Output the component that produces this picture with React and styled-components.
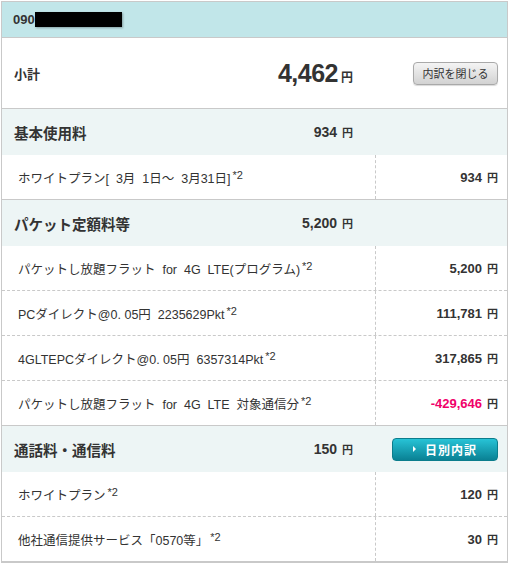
import React from "react";
import styled, { createGlobalStyle } from "styled-components";

const GlobalStyle = createGlobalStyle`
  body {
    margin: 0;
    background: #fff;
    font-family: "Liberation Sans", "Noto Sans CJK JP", sans-serif;
    color: #333;
  }
`;

const groups = [
  {
    title: "基本使用料",
    amount: "934",
    items: [{ name: "ホワイトプラン[  3月  1日～  3月31日]", note: true, amount: "934" }],
  },
  {
    title: "パケット定額料等",
    amount: "5,200",
    items: [
      { name: "パケットし放題フラット  for  4G  LTE(プログラム)", note: true, amount: "5,200" },
      { name: "PCダイレクト@0. 05円  2235629Pkt", note: true, amount: "111,781" },
      { name: "4GLTEPCダイレクト@0. 05円  6357314Pkt", note: true, amount: "317,865" },
      { name: "パケットし放題フラット  for  4G  LTE  対象通信分", note: true, amount: "-429,646", minus: true },
    ],
  },
  {
    title: "通話料・通信料",
    amount: "150",
    daily: true,
    items: [
      { name: "ホワイトプラン", note: true, amount: "120" },
      { name: "他社通信提供サービス「0570等」", note: true, amount: "30" },
    ],
  },
];

const App = () => {
  return (
    <>
      <GlobalStyle />
      <Bill>
        <Header>
          090<Redact />
        </Header>
        <SubtotalRow>
          <SubLabel>小計</SubLabel>
          <SubAmount>
            4,462<Yen $big>円</Yen>
          </SubAmount>
          <GrayButton type="button">内訳を閉じる</GrayButton>
        </SubtotalRow>
        {groups.map((g) => (
          <React.Fragment key={g.title}>
            <SectionRow>
              <SectionTitle>{g.title}</SectionTitle>
              <SectionAmount>
                {g.amount}
                <Yen>円</Yen>
              </SectionAmount>
              <SectionSide>
                {g.daily && (
                  <TealButton type="button">
                    <Arrow />
                    日別内訳
                  </TealButton>
                )}
              </SectionSide>
            </SectionRow>
            {g.items.map((it, i) => (
              <ItemRow key={it.name} $last={i === g.items.length - 1}>
                <ItemName>
                  {it.name}
                  {it.note && <Note>*2</Note>}
                </ItemName>
                <ItemAmount $minus={it.minus}>
                  {it.amount}
                  <Yen>円</Yen>
                </ItemAmount>
              </ItemRow>
            ))}
          </React.Fragment>
        ))}
      </Bill>
    </>
  );
};

export default App;

const Bill = styled.div`
  width: 505px;
  margin: 1px 0 0 1px;
  border: 1px solid #c9c9c9;
`;

const Header = styled.div`
  height: 35px;
  background: #c1e6e9;
  border-bottom: 1px solid #c9c9c9;
  display: flex;
  align-items: center;
  padding-left: 11px;
  font-size: 13px;
  font-weight: bold;
  color: #333;
`;

const Redact = styled.span`
  display: inline-block;
  width: 87px;
  height: 15px;
  background: #000;
  box-shadow: 1px 1px 2px rgba(0, 0, 0, 0.3);
`;

const SubtotalRow = styled.div`
  height: 70px;
  border-bottom: 1px solid #c9c9c9;
  display: grid;
  grid-template-columns: 1fr 133px;
  align-items: center;
  position: relative;
`;

const SubLabel = styled.div`
  position: absolute;
  left: 12px;
  font-size: 13px;
  font-weight: bold;
`;

const SubAmount = styled.div`
  justify-self: end;
  padding-right: 21px;
  font-size: 25px;
  font-weight: bold;
  letter-spacing: -0.5px;
  color: #333;
`;

const Yen = styled.span`
  font-size: ${(p) => (p.$big ? "12px" : "11px")};
  font-weight: bold;
  margin-left: ${(p) => (p.$big ? "3px" : "5px")};
  letter-spacing: 0;
`;

const GrayButton = styled.button`
  justify-self: end;
  margin-right: 9px;
  width: 85px;
  height: 23px;
  border: 1px solid #a9a9a9;
  border-radius: 4px;
  background: linear-gradient(#f4f4f4, #d2d2d2);
  font-family: "Noto Sans CJK JP", sans-serif;
  font-size: 11px;
  color: #333;
  padding: 0;
  box-shadow: 0 1px 1px rgba(0, 0, 0, 0.15);
`;

const SectionRow = styled.div`
  height: 46px;
  background: #edf5f5;
  display: grid;
  grid-template-columns: 1fr auto 133px;
  align-items: center;
`;

const SectionTitle = styled.div`
  padding-left: 12px;
  font-size: 14.5px;
  font-weight: bold;
`;

const SectionAmount = styled.div`
  padding-right: 21px;
  font-size: 14px;
  font-weight: bold;
`;

const SectionSide = styled.div`
  display: flex;
  justify-content: flex-end;
  padding-right: 9px;
`;

const TealButton = styled.button`
  width: 106px;
  height: 23px;
  border: 1px solid #0b7d8c;
  border-radius: 4px;
  background: linear-gradient(#27c3d6, #0a8194);
  color: #fff;
  font-family: "Noto Sans CJK JP", sans-serif;
  font-size: 12px;
  font-weight: bold;
  letter-spacing: 1px;
  display: flex;
  align-items: center;
  justify-content: center;
  gap: 9px;
  padding: 0;
`;

const Arrow = styled.span`
  width: 0;
  height: 0;
  border-left: 3px solid #fff;
  border-top: 3px solid transparent;
  border-bottom: 3px solid transparent;
`;

const ItemRow = styled.div`
  height: 44px;
  display: grid;
  grid-template-columns: 1fr 132px;
  border-bottom: 1px ${(p) => (p.$last ? "solid #c9c9c9" : "dashed #c9c9c9")};
`;

const ItemName = styled.div`
  display: flex;
  align-items: center;
  padding-left: 16px;
  font-size: 12.5px;
  color: #333;
  white-space: pre;
`;

const Note = styled.sup`
  font-size: 11px;
  margin-left: 2px;
  position: relative;
  top: -2px;
`;

const ItemAmount = styled.div`
  border-left: 1px dashed #c9c9c9;
  display: flex;
  align-items: center;
  justify-content: flex-end;
  padding-right: 9px;
  font-size: 13px;
  font-weight: bold;
  color: ${(p) => (p.$minus ? "#f0006a" : "#333")};
  span {
    color: #333;
  }
`;
